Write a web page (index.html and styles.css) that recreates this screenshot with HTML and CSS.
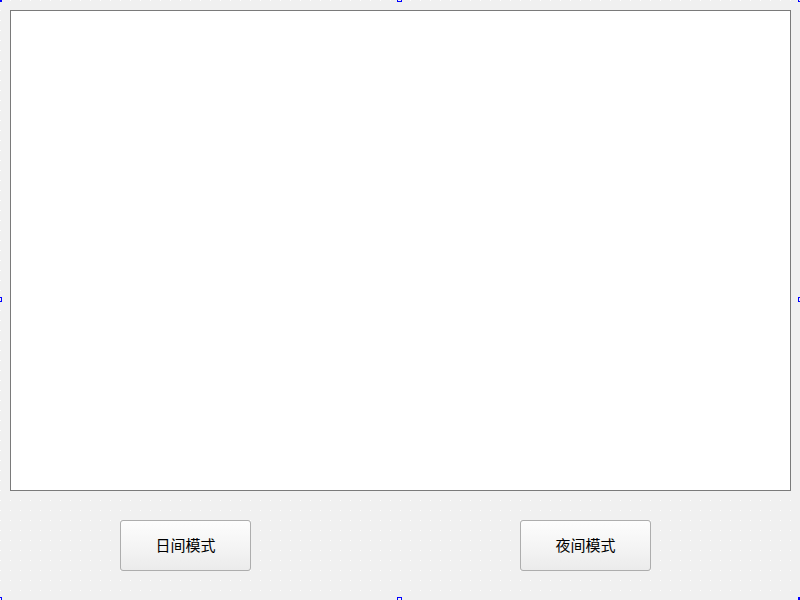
FILE: index.html
```html
<!DOCTYPE html>
<html lang="zh">
<head>
<meta charset="utf-8">
<title>模式切换</title>
<link rel="stylesheet" href="styles.css">
</head>
<body>
<div class="form">
  <div class="canvas"></div>
  <div class="buttons">
    <button class="btn">日间模式</button>
    <button class="btn">夜间模式</button>
  </div>
  <span class="handle h-tl"></span>
  <span class="handle h-tm"></span>
  <span class="handle h-tr"></span>
  <span class="handle h-ml"></span>
  <span class="handle h-mr"></span>
  <span class="handle h-bl"></span>
  <span class="handle h-bm"></span>
  <span class="handle h-br"></span>
</div>
</body>
</html>
```
FILE: styles.css
```css
html, body {
  margin: 0;
  padding: 0;
  width: 800px;
  height: 600px;
  overflow: hidden;
}
body {
  background-color: #f0f0f0;
  font-family: "Noto Sans CJK SC", "Noto Sans", sans-serif;
}
.form {
  position: relative;
  width: 800px;
  height: 600px;
  box-sizing: border-box;
  padding: 10px;
  background-color: #f0f0f0;
  background-image: url("data:image/svg+xml,%3Csvg xmlns='http://www.w3.org/2000/svg' width='10' height='10'%3E%3Crect width='1' height='1' fill='%23ffffff'/%3E%3C/svg%3E");
  background-size: 10px 10px;
  background-position: 0 0;
}
.canvas {
  width: 781px;
  height: 481px;
  box-sizing: border-box;
  background: #ffffff;
  border: 1px solid #7a7a7a;
}
.buttons {
  display: flex;
  gap: 269px;
  margin-top: 29px;
  padding-left: 110px;
}
.btn {
  width: 131px;
  height: 51px;
  box-sizing: border-box;
  border: 1px solid #adadad;
  border-radius: 3px;
  background: linear-gradient(to bottom, #fdfdfd 0%, #f3f3f3 60%, #ebebeb 100%);
  font-family: "Noto Sans CJK SC", "Noto Sans", sans-serif;
  font-size: 15px;
  color: #000;
  padding: 0 0 1px 0;
  margin: 0;
  line-height: 48px;
}
.handle {
  position: absolute;
  width: 5px;
  height: 5px;
  box-sizing: border-box;
  border: 1px solid #0000ff;
  background: #f0f0f0;
}
.h-tl { left: -3px; top: -3px; background: #0000ff; }
.h-tm { left: 397px; top: -3px; }
.h-tr { left: 798px; top: -3px; }
.h-ml { left: -3px; top: 297px; }
.h-mr { left: 798px; top: 297px; }
.h-bl { left: -3px; top: 597px; }
.h-bm { left: 397px; top: 597px; }
.h-br { left: 798px; top: 597px; background: #0000ff; }
```
